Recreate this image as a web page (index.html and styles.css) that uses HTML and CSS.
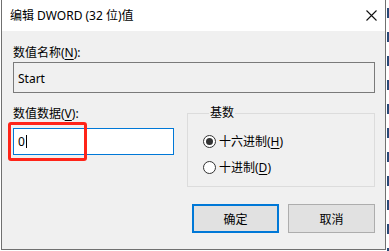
FILE: index.html
```html
<!DOCTYPE html>
<html>
	<head>
		<meta charset="utf-8">
		<title>编辑 DWORD (32 位)值</title>
		<link rel="stylesheet" href="styles.css">
	</head>
	<body>
		<div class="screen">
			<div class="dialog">
				<!--Title bar-->
				<div class="titlebar">
					<span class="title">编辑 DWORD (32 位)值</span>
					<span class="close">
						<svg width="11" height="11" viewBox="0 0 11 11"><path d="M0.5 0.5 L10.5 10.5 M10.5 0.5 L0.5 10.5" stroke="#111" stroke-width="1.1" fill="none"/></svg>
					</span>
				</div>

				<div class="content">
					<div class="label">数值名称(<u>N</u>):</div>
					<div class="field readonly">Start</div>

					<div class="row">
						<div class="data">
							<div class="label">数值数据(<u>V</u>):</div>
							<div class="field active">0<span class="caret"></span></div>
						</div>

						<!--Radix choice-->
						<fieldset class="base">
							<legend>基数</legend>
							<label class="radio"><span class="dot checked"></span>十六进制(<u>H</u>)</label>
							<label class="radio second"><span class="dot"></span>十进制(<u>D</u>)</label>
						</fieldset>
					</div>

					<div class="buttons">
						<button class="btn default">确定</button>
						<button class="btn">取消</button>
					</div>
				</div>
			</div>

			<!--Window behind the dialog-->
			<div class="edge"></div>

			<!--Annotation-->
			<div class="highlight"></div>
		</div>
	</body>
</html>
```

FILE: styles.css
```css
body {
	margin: 0;
	background-color: #ffffff;
	font-family: "Noto Sans", "Noto Sans CJK SC", sans-serif;
	font-size: 12px;
	color: #000000;
}

u {
	text-decoration-thickness: 1px;
	text-underline-offset: 2px;
}

.screen {
	display: flex;
	width: 389px;
	height: 251px;
	overflow: hidden;
}

.dialog {
	box-sizing: border-box;
	width: 385px;
	height: 250px;
	margin-left: 1px;
	border: 1px solid #707070;
	border-top: 0;
	background-color: #f0f0f0;
	flex-shrink: 0;
}

/*Title bar*/
.titlebar {
	height: 31px;
	background-color: #ffffff;
	display: flex;
	align-items: center;
	justify-content: space-between;
	padding: 0 8px 0 8px;
}

.title {
	line-height: 16px;
	padding-top: 1px;
}

.close {
	display: flex;
	padding-bottom: 1px;
}

/*Body*/
.content {
	padding: 14px 10px 0 11px;
}

.label {
	line-height: 16px;
	height: 16px;
	white-space: nowrap;
}

.field {
	box-sizing: border-box;
	display: flex;
	align-items: center;
	padding-left: 4px;
}

.readonly {
	margin-top: 1px;
	height: 31px;
	padding-top: 2px;
	border: 1px solid #7a7a7a;
	background-color: #f0f0f0;
}

.row {
	display: flex;
	margin-top: 13px;
	gap: 13px;
}

.data {
	width: 161px;
}

.active {
	margin-top: 6px;
	height: 27px;
	border: 1px solid #0078d7;
	background-color: #ffffff;
}

.caret {
	display: inline-block;
	width: 1px;
	height: 13px;
	margin-left: 1px;
	background-color: #000000;
}

/*Group box*/
.base {
	box-sizing: border-box;
	width: 188px;
	margin: 0;
	padding: 13px 0 11px 15px;
	border: 1px solid #dcdcdc;
	min-width: 0;
}

.base legend {
	line-height: 14px;
	margin-left: 6px;
	padding: 0 1px;
}

.radio {
	display: flex;
	align-items: center;
	height: 16px;
	white-space: nowrap;
}

.second {
	margin-top: 10px;
}

.dot {
	box-sizing: border-box;
	width: 13px;
	height: 13px;
	border: 1px solid #333333;
	border-radius: 50%;
	background-color: #ffffff;
	margin-right: 3px;
	display: flex;
	align-items: center;
	justify-content: center;
}

.dot.checked::after {
	content: "";
	width: 7px;
	height: 7px;
	border-radius: 50%;
	background-color: #333333;
}

/*Buttons*/
.buttons {
	display: flex;
	justify-content: flex-end;
	gap: 9px;
	margin-top: 17px;
}

.btn {
	box-sizing: border-box;
	width: 87px;
	height: 29px;
	margin: 0;
	padding: 0;
	font-family: "Noto Sans", "Noto Sans CJK SC", sans-serif;
	font-size: 12px;
	color: #000000;
	background-color: #e1e1e1;
	border: 1px solid #adadad;
}

.btn.default {
	border: 2px solid #0078d7;
}

/*Window behind: clipped letters at the edge*/
.edge {
	width: 3px;
	margin-left: 1px;
	background: repeating-linear-gradient(to bottom, #ffffff 0px, #ffffff 8px, #2a4a78 8px, #2a4a78 18px, #ffffff 18px, #ffffff 24px);
}

/*Red annotation box*/
.highlight {
	position: absolute;
	left: 8px;
	top: 122px;
	width: 79px;
	height: 39px;
	box-sizing: border-box;
	border: 3px solid #ff2418;
	border-radius: 3px;
}
```
